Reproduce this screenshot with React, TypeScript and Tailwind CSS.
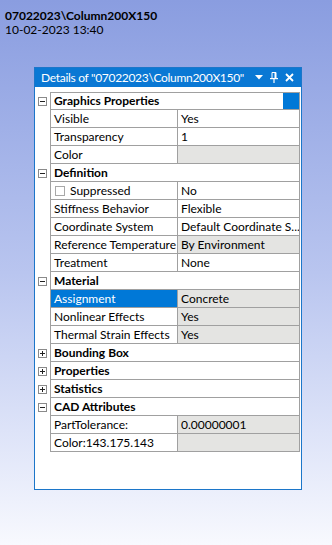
import React from "react";

type Row =
  | { kind: "cat"; label: string; open: boolean; marker?: boolean }
  | {
      kind: "prop";
      label: string;
      value: string;
      ro?: boolean;
      sel?: boolean;
      check?: boolean;
    };

const rows: Row[] = [
  { kind: "cat", label: "Graphics Properties", open: true, marker: true },
  { kind: "prop", label: "Visible", value: "Yes" },
  { kind: "prop", label: "Transparency", value: "1" },
  { kind: "prop", label: "Color", value: "", ro: true },
  { kind: "cat", label: "Definition", open: true },
  { kind: "prop", label: "Suppressed", value: "No", check: true },
  { kind: "prop", label: "Stiffness Behavior", value: "Flexible" },
  { kind: "prop", label: "Coordinate System", value: "Default Coordinate S..." },
  { kind: "prop", label: "Reference Temperature", value: "By Environment", ro: true },
  { kind: "prop", label: "Treatment", value: "None" },
  { kind: "cat", label: "Material", open: true },
  { kind: "prop", label: "Assignment", value: "Concrete", ro: true, sel: true },
  { kind: "prop", label: "Nonlinear Effects", value: "Yes", ro: true },
  { kind: "prop", label: "Thermal Strain Effects", value: "Yes", ro: true },
  { kind: "cat", label: "Bounding Box", open: false },
  { kind: "cat", label: "Properties", open: false },
  { kind: "cat", label: "Statistics", open: false },
  { kind: "cat", label: "CAD Attributes", open: true },
  { kind: "prop", label: "PartTolerance:", value: "0.00000001", ro: true },
  { kind: "prop", label: "Color:143.175.143", value: "", ro: true },
];

function Expander({ open }: { open: boolean }) {
  return (
    <svg width="9" height="9" viewBox="0 0 9 9" className="block">
      <rect x="0.5" y="0.5" width="8" height="8" fill="#fff" stroke="#8a8a8a" />
      <line x1="2" y1="4.5" x2="7" y2="4.5" stroke="#222" />
      {!open && <line x1="4.5" y1="2" x2="4.5" y2="7" stroke="#222" />}
    </svg>
  );
}

function GridRow({ row, first }: { row: Row; first: boolean }) {
  return (
    <div className="flex h-[18px]">
      <div className="w-[15px] shrink-0 flex items-center pl-[3px]">
        {row.kind === "cat" && <Expander open={row.open} />}
      </div>
      <div
        className={`flex h-[18px] w-[250px] border-l border-r border-b border-[#a0a0a0] ${
          first ? "border-t" : ""
        }`}
      >
        {row.kind === "cat" ? (
          <div className="flex flex-1 items-center justify-between">
            <span className="pl-[3px] font-bold text-black">{row.label}</span>
            {row.marker && <div className="w-[16px] self-stretch bg-[#0078d7]" />}
          </div>
        ) : (
          <>
            <div
              className={`flex w-[127px] shrink-0 items-center overflow-hidden border-r border-[#a0a0a0] pl-[3px] ${
                row.sel ? "bg-[#0078d7] text-white" : "text-black"
              }`}
            >
              {row.check && (
                <span className="mr-[5px] ml-[1px] inline-block h-[10px] w-[10px] shrink-0 border border-[#a8a8a8] bg-white" />
              )}
              <span className="whitespace-nowrap">{row.label}</span>
            </div>
            <div
              className={`flex min-w-0 flex-1 items-center overflow-hidden pl-[3px] text-black ${
                row.ro ? "bg-[#e4e4e2]" : "bg-white"
              }`}
            >
              <span className="whitespace-nowrap">{row.value}</span>
            </div>
          </>
        )}
      </div>
    </div>
  );
}

export default function App() {
  return (
    <div
      className="h-[545px] w-[332px] overflow-hidden bg-gradient-to-b from-[#8a9de0] via-[#b9c5ef] to-[#f8f9fe] text-[12px]"
      style={{ fontFamily: "Lato, 'Noto Sans', sans-serif" }}
    >
      <div className="pl-[5px] pt-[9px] leading-[14px] text-black">
        <div className="font-bold">07022023\Column200X150</div>
        <div>10-02-2023 13:40</div>
      </div>
      <div className="ml-[34px] mt-[30px] flex h-[423px] w-[268px] flex-col border border-[#1c76c9] bg-white">
        <div className="flex h-[19px] shrink-0 items-center bg-[#0a78d4] pl-[6px] pr-[7px] text-white">
          <span className="min-w-0 flex-1 overflow-hidden whitespace-nowrap text-[12px] tracking-[-0.3px]">
            Details of "07022023\Column200X150"
          </span>
          <div className="flex shrink-0 items-center gap-[7px] pl-[4px]">
            <svg width="8" height="5" viewBox="0 0 8 5">
              <path d="M0 0H8L4 4.5Z" fill="#fff" />
            </svg>
            <svg width="8" height="11" viewBox="0 0 8 11">
              <path d="M2 0.5H6V6.5H2Z" fill="none" stroke="#fff" />
              <rect x="4.5" y="0.5" width="1.5" height="6" fill="#fff" />
              <rect x="0" y="6" width="8" height="1.2" fill="#fff" />
              <rect x="3.4" y="7" width="1.2" height="4" fill="#fff" />
            </svg>
            <svg width="9" height="9" viewBox="0 0 9 9">
              <path d="M1 1L8 8M8 1L1 8" stroke="#fff" strokeWidth="1.8" />
            </svg>
          </div>
        </div>
        <div className="pt-[5px]">
          {rows.map((r, i) => (
            <GridRow key={i} row={r} first={i === 0} />
          ))}
        </div>
      </div>
    </div>
  );
}
